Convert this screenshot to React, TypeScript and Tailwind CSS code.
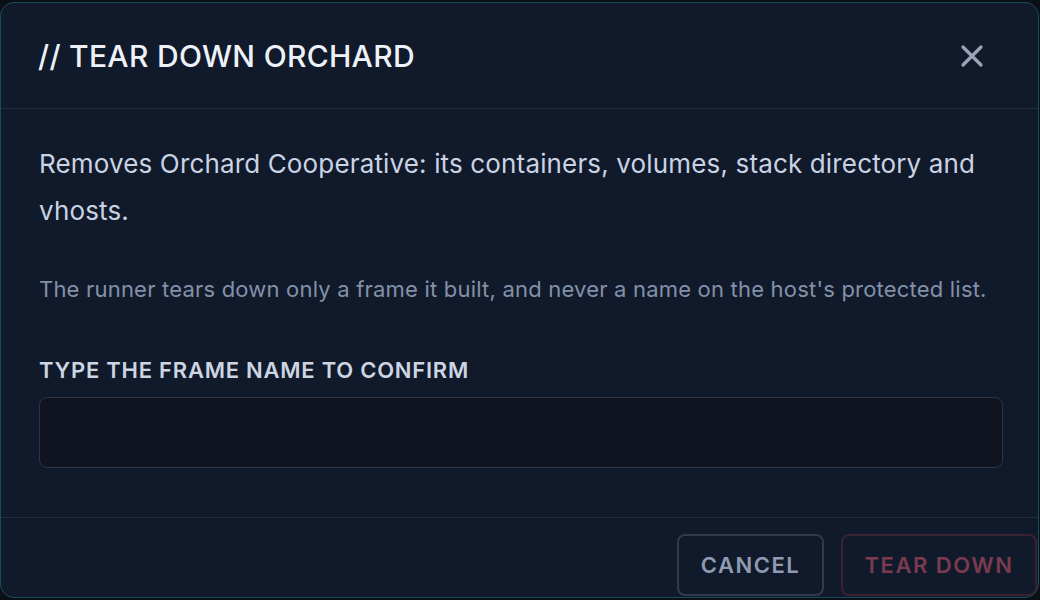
import React from "react";

export default function App() {
  return (
    <div className="w-[1040px] h-[600px] bg-[#0b0f16] pt-[2px] overflow-hidden" style={{ fontFamily: "Inter, 'Noto Sans', sans-serif" }}>
      <div className="w-[1039px] h-[596px] rounded-[14px] border border-[#1a4b5c] bg-[#111a2b] overflow-hidden flex flex-col">
        <div className="h-[106px] shrink-0 px-[37px] flex items-center justify-between border-b border-[#222d3e]">
          <h1 className="text-[30px] leading-[40px] font-medium text-[#eef2f8] tracking-[0.3px]">// TEAR DOWN ORCHARD</h1>
          <button className="w-[26px] h-[26px] flex items-center justify-center text-[#9aa5b8] mr-[16px]">
            <svg width="24" height="24" viewBox="0 0 24 24" fill="none" stroke="currentColor" strokeWidth="3.2" strokeLinecap="round">
              <path d="M3 3L21 21M21 3L3 21" />
            </svg>
          </button>
        </div>
        <div className="px-[38px] pt-[31px] shrink-0">
          <p className="text-[26px] leading-[47px] tracking-[0.15px] text-[#c9d3e3]">
            Removes Orchard Cooperative: its containers, volumes, stack directory and vhosts.
          </p>
          <p className="mt-[40px] text-[22px] leading-[30px] tracking-[0.2px] text-[#8391a8] whitespace-nowrap">
            The runner tears down only a frame it built, and never a name on the host's protected list.
          </p>
          <label className="block mt-[51px] text-[22px] leading-[30px] font-semibold tracking-[0.75px] text-[#cdd5e3]">
            TYPE THE FRAME NAME TO CONFIRM
          </label>
          <div className="mt-[12px] h-[71px] w-[964px] rounded-[8px] border border-[#2d3647] bg-[#0f1420]"></div>
        </div>
        <div className="mt-[49px] border-t border-[#222d3e] flex justify-end gap-[17px] pt-[16px] pr-[1px]">
          <button className="w-[147px] h-[62px] rounded-[8px] border-2 border-[#2f3a4c] text-[22px] font-semibold tracking-[1.5px] text-[#8f9bb0]">
            CANCEL
          </button>
          <button className="w-[196px] h-[62px] rounded-[8px] border-2 border-[#3a2233] text-[22px] font-semibold tracking-[1.5px] text-[#7a3a4f]">
            TEAR DOWN
          </button>
        </div>
      </div>
    </div>
  );
}
